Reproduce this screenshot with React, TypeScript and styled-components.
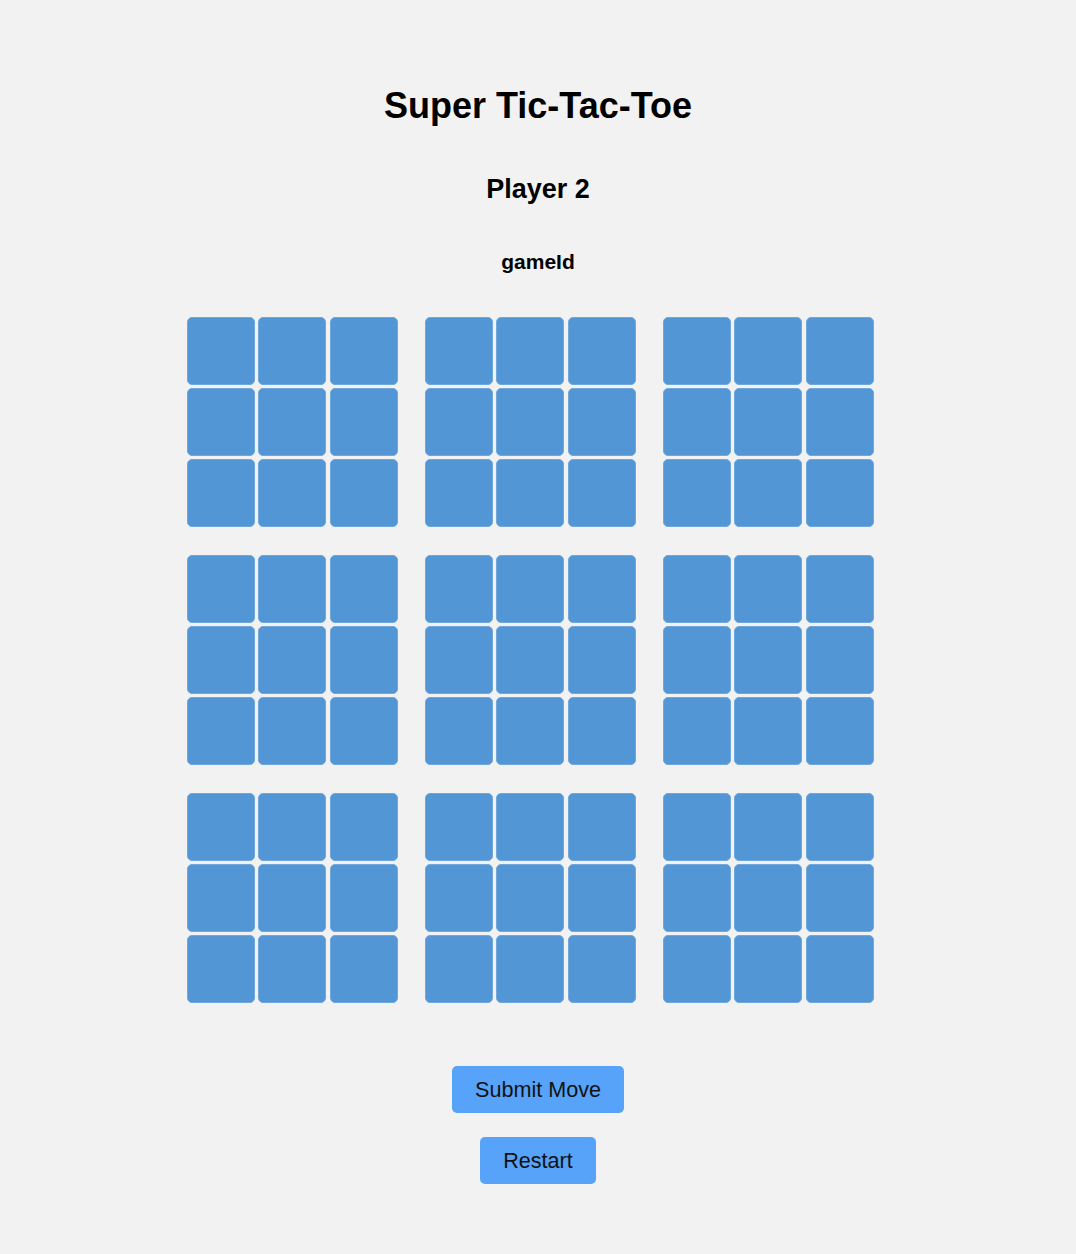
import React from "react";
import styled, { createGlobalStyle } from "styled-components";

const Global = createGlobalStyle`
  html, body { margin: 0; padding: 0; background: #f2f2f2; }
  body { font-family: "Liberation Sans", Arial, sans-serif; color: #000; }
`;

const Page = styled.div`
  min-height: 1254px;
  display: flex;
  flex-direction: column;
  align-items: center;
  padding-top: 86px;
  box-sizing: border-box;
`;

const Title = styled.h1`
  margin: 0;
  font-size: 36px;
  line-height: 40px;
  font-weight: 700;
`;

const Player = styled.h2`
  margin: 48px 0 0;
  font-size: 27px;
  line-height: 30px;
  font-weight: 700;
`;

const GameId = styled.h3`
  margin: 46px 0 0;
  font-size: 21px;
  line-height: 24px;
  font-weight: 700;
`;

const SuperGrid = styled.div`
  margin-top: 43px;
  padding-right: 16px;
  display: grid;
  grid-template-columns: repeat(3, 211px);
  column-gap: 27px;
  row-gap: 28px;
`;

const Board = styled.div`
  display: grid;
  grid-template-columns: repeat(3, 68px);
  grid-auto-rows: 68px;
  column-gap: 3.5px;
  row-gap: 3px;
`;

const Cell = styled.button`
  width: 68px;
  height: 68px;
  padding: 0;
  background: #5296d5;
  border: 1px solid #6ea8dd;
  border-radius: 5px;
  box-sizing: border-box;
  cursor: pointer;
`;

const Actions = styled.div`
  margin-top: 63px;
  display: flex;
  flex-direction: column;
  align-items: center;
  gap: 24px;
`;

const ActionButton = styled.button`
  font-family: "Liberation Sans", Arial, sans-serif;
  font-size: 21.6px;
  line-height: 25px;
  padding: 11px 23px;
  background: #56a3f9;
  color: #111;
  border: none;
  border-radius: 5px;
  cursor: pointer;
`;

export default function App() {
  const boards = Array.from({ length: 9 });
  const cells = Array.from({ length: 9 });
  return (
    <>
      <Global />
      <Page>
        <Title>Super Tic-Tac-Toe</Title>
        <Player>Player 2</Player>
        <GameId>gameId</GameId>
        <SuperGrid>
          {boards.map((_, b) => (
            <Board key={b}>
              {cells.map((__, c) => (
                <Cell key={c} aria-label={`board ${b + 1} cell ${c + 1}`} />
              ))}
            </Board>
          ))}
        </SuperGrid>
        <Actions>
          <ActionButton>Submit Move</ActionButton>
          <ActionButton>Restart</ActionButton>
        </Actions>
      </Page>
    </>
  );
}
